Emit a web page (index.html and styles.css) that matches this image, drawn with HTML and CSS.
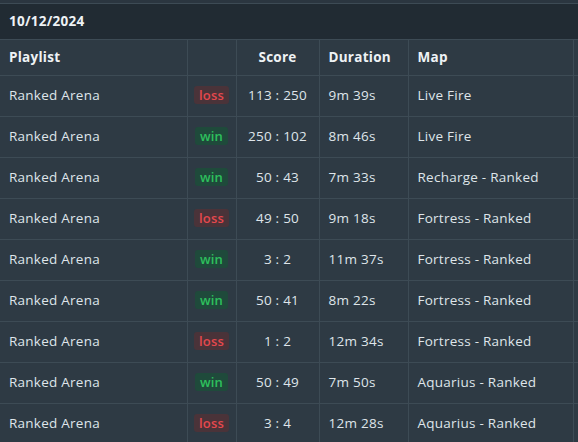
FILE: index.html
```html
<!DOCTYPE html>
<html>
<head>
<meta charset="utf-8">
<link rel="stylesheet" href="styles.css">
</head>
<body>
<div class="top-strip"></div>
<section class="day">
  <div class="day-head">10/12/2024</div>
  <div class="scroller">
  <table class="matches">
    <colgroup>
      <col class="c-playlist"><col class="c-result"><col class="c-score"><col class="c-dur"><col class="c-map"><col class="c-extra">
    </colgroup>
    <thead>
      <tr><th>Playlist</th><th></th><th class="center">Score</th><th>Duration</th><th>Map</th><th></th></tr>
    </thead>
    <tbody>
      <tr><td>Ranked Arena</td><td class="center"><span class="badge loss">loss</span></td><td class="center">113 : 250</td><td>9m 39s</td><td>Live Fire</td><td></td></tr>
      <tr><td>Ranked Arena</td><td class="center"><span class="badge win">win</span></td><td class="center">250 : 102</td><td>8m 46s</td><td>Live Fire</td><td></td></tr>
      <tr><td>Ranked Arena</td><td class="center"><span class="badge win">win</span></td><td class="center">50 : 43</td><td>7m 33s</td><td>Recharge - Ranked</td><td></td></tr>
      <tr><td>Ranked Arena</td><td class="center"><span class="badge loss">loss</span></td><td class="center">49 : 50</td><td>9m 18s</td><td>Fortress - Ranked</td><td></td></tr>
      <tr><td>Ranked Arena</td><td class="center"><span class="badge win">win</span></td><td class="center">3 : 2</td><td>11m 37s</td><td>Fortress - Ranked</td><td></td></tr>
      <tr><td>Ranked Arena</td><td class="center"><span class="badge win">win</span></td><td class="center">50 : 41</td><td>8m 22s</td><td>Fortress - Ranked</td><td></td></tr>
      <tr><td>Ranked Arena</td><td class="center"><span class="badge loss">loss</span></td><td class="center">1 : 2</td><td>12m 34s</td><td>Fortress - Ranked</td><td></td></tr>
      <tr><td>Ranked Arena</td><td class="center"><span class="badge win">win</span></td><td class="center">50 : 49</td><td>7m 50s</td><td>Aquarius - Ranked</td><td></td></tr>
      <tr><td>Ranked Arena</td><td class="center"><span class="badge loss">loss</span></td><td class="center">3 : 4</td><td>12m 28s</td><td>Aquarius - Ranked</td><td></td></tr>
    </tbody>
  </table>
  </div>
</section>
</body>
</html>
```
FILE: styles.css
```css
html, body {
  margin: 0;
  padding: 0;
  background: #2e3a44;
  overflow: hidden;
}
body {
  font-family: "Open Sans", "Noto Sans", sans-serif;
  color: #dfe5ea;
  font-size: 13.5px;
  letter-spacing: 0.25px;
}
.top-strip {
  height: 3px;
  background: #2b3640;
  border-bottom: 1px solid #3d4b55;
}
.day-head {
  background: #212b33;
  height: 35px;
  line-height: 35px;
  padding-left: 9px;
  font-weight: 700;
  font-size: 13.5px;
  color: #eef2f5;
  border-bottom: 1px solid #3d4b55;
}
.scroller {
  width: 578px;
  overflow: hidden;
}
.matches {
  border-collapse: collapse;
  table-layout: fixed;
  width: 700px;
  background: #2e3a44;
}
.c-playlist { width: 187px; }
.c-result { width: 49px; }
.c-score { width: 83px; }
.c-dur { width: 89px; }
.c-map { width: 165px; }
.c-extra { width: 127px; }
.matches th, .matches td {
  border-right: 1px solid #3d4b55;
  border-bottom: 1px solid #3d4b55;
  padding: 0 0 2px 9px;
  text-align: left;
  white-space: nowrap;
  box-sizing: border-box;
}
.matches th {
  height: 35px;
  padding-bottom: 0;
  font-weight: 700;
  color: #eef2f5;
}
.matches td {
  height: 41px;
}
.matches .center {
  text-align: center;
  padding-left: 0;
}
.badge {
  display: inline-block;
  padding: 0 5px;
  line-height: 18px;
  border-radius: 3px;
  font-weight: 600;
  font-size: 13px;
  letter-spacing: 0.2px;
}
.badge.loss {
  background: #4a3339;
  color: #e5484d;
}
.badge.win {
  background: #1f4a3b;
  color: #2ec05d;
}
```
